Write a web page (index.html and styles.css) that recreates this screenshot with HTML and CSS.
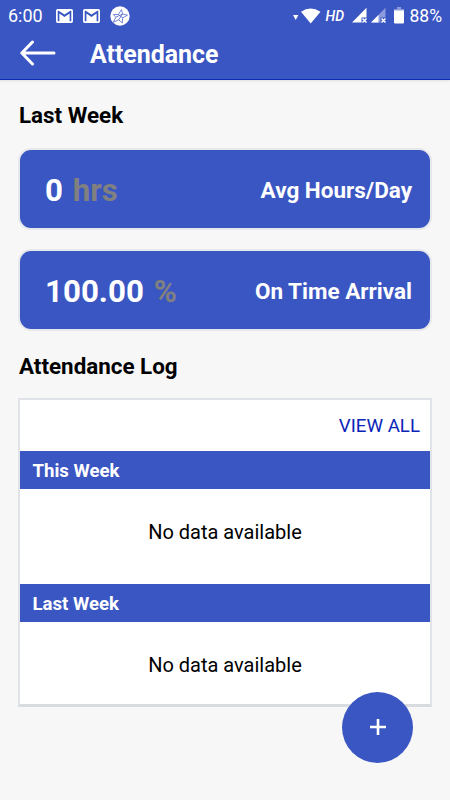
FILE: index.html
```
<!DOCTYPE html>
<html lang="en">
<head>
<meta charset="utf-8">
<title>Attendance</title>
<link rel="stylesheet" href="styles.css">
</head>

<body>

<div class="top">
	<div class="status">
		<span class="time">6:00</span>
		<svg class="mail" width="17" height="14" viewBox="2 4 20 16" preserveAspectRatio="none"><path d="M20 18h-2V9.250L12 13 6 9.250V18H4V6h1.200l6.800 4.250L18.800 6H20zm0-14H4a2 2 0 0 0-2 2v12a2 2 0 0 0 2 2h16a2 2 0 0 0 2-2V6a2 2 0 0 0-2-2z" fill="#fff"/></svg>
		<svg class="mail" width="17" height="14" viewBox="2 4 20 16" preserveAspectRatio="none"><path d="M20 18h-2V9.250L12 13 6 9.250V18H4V6h1.200l6.800 4.250L18.800 6H20zm0-14H4a2 2 0 0 0-2 2v12a2 2 0 0 0 2 2h16a2 2 0 0 0 2-2V6a2 2 0 0 0-2-2z" fill="#fff"/></svg>
		<svg class="star" width="20" height="20" viewBox="0 0 20 20"><circle cx="10" cy="10" r="9.7" fill="#fff"/><path d="M11.500 3.500l1 4.500 5 1.200-4.800 2.600-.4 5.200-3.600-3.200-5.500 2.500 2.600-5-2.500-2.900 5 .2zM5.800 11.300l6.700-3.300M8.300 8.600l4.400 3.200M12.500 8l-3.800 5.800" fill="none" stroke="#5368cc" stroke-width=".8"/></svg>
		<div class="right">
			<svg width="28" height="18" viewBox="0 0 28 18"><path d="M0 8h5.400l-2.700 5z" fill="#fff"/><path d="M8 4.800Q17.500-1.800 27.500 4.800L17.700 16.500z" fill="#fff"/></svg>
			<span class="hd">HD</span>
			<svg class="signal" width="35" height="17" viewBox="0 0 35 17"><path d="M0 15.500 14.500.8v9.700h-5v5z" fill="#fff"/><path d="M10.500 11.500l4 4m0-4l-4 4" stroke="#fff" stroke-width="1.500"/><path d="M19 15.500 33.500.8v9.700h-5v5z" fill="#8c9bdd"/><path d="M19 15.500 26.500 7.900v7.600z" fill="#fff"/><path d="M29.500 11.500l4 4m0-4l-4 4" stroke="#fff" stroke-width="1.500"/></svg>
			<svg class="battery" width="10" height="17" viewBox="0 0 10 17"><path d="M3 0h4v2h3v2H0V2h3z" fill="#8c9bdd"/><path d="M0 3.500h10V15.500q0 1-1 1H1q-1 0-1-1z" fill="#fff"/></svg>
			<span class="percent">88%</span>
		</div>
	</div>
	<div class="bar">
		<svg width="36" height="26" viewBox="0 0 36 26"><path d="M12.500 2 1.800 13l10.700 11M2 13h32" fill="none" stroke="#fff" stroke-width="3" stroke-linecap="round" stroke-linejoin="round"/></svg>
		<h1>Attendance</h1>
	</div>
</div>

<div class="main">
	<h2>Last Week</h2>
	<div class="card">
		<div class="num">0 <span>hrs</span></div>
		<div class="label">Avg Hours/Day</div>
	</div>
	<div class="card">
		<div class="num">100.00 <span>%</span></div>
		<div class="label">On Time Arrival</div>
	</div>
	<h2 class="log-title">Attendance Log</h2>
	<div class="log">
		<div class="all"><a>VIEW ALL</a></div>
		<h3>This Week</h3>
		<p>No data available</p>
		<h3>Last Week</h3>
		<p class="last">No data available</p>
	</div>
</div>

<div class="add"><svg width="16" height="16" viewBox="0 0 16 16"><path d="M8 0v16M0 8h16" stroke="#fff" stroke-width="2.600"/></svg></div>

</body>
</html>
```
FILE: styles.css
```
* { margin: 0; padding: 0; box-sizing: border-box; }

body { width: 450px; height: 800px; overflow: hidden; position: relative; background: #f7f7f7; color: #000; font-family: Roboto, "Liberation Sans", sans-serif; }
svg { display: block; flex: none; }

.top { height: 80px; background: #3a56c3; border-bottom: 1px solid #0b2bb0; color: #fff; box-shadow: 0 1px 2px #ddd; }
.status { display: flex; align-items: center; height: 31px; padding: 0 8px; }
.time { width: 48px; padding-top: 1px; font-size: 18px; line-height: 30px; }
.mail { margin-right: 10px; }
.right { display: flex; align-items: center; margin-left: auto; }
.hd { width: 26px; margin-left: 5px; font-size: 14px; font-weight: 500; font-style: italic; }
.percent { margin-left: 6px; padding-top: 1px; font-size: 17.5px; line-height: 30px; }
.battery { margin-left: 7px; }

.bar { display: flex; align-items: center; height: 44px; padding-left: 20px; }
.bar h1 { padding-top: 4px; margin-left: 34px; font-size: 24.9px; line-height: 40px; font-weight: 700; }

.main { padding: 18px 18px 0; }
.main h2 { height: 50px; padding-left: 1px; font-size: 22.4px; line-height: 35px; font-weight: 700; }

.card { display: flex; align-items: center; justify-content: space-between; height: 82px; margin-bottom: 19px; padding: 2px 17px 0 25px; background: #3a56c3; border: 2px solid #e6e8ec; border-radius: 13px; color: #fff; }
.num { font-size: 31.3px; font-weight: 700; }
.num span { margin-left: 2px; color: #808080; }
.label { padding-right: 1px; font-size: 22.5px; font-weight: 700; }

.main .log-title { height: 48px; line-height: 33px; }
.log { height: 309px; background: #fff; border: 2px solid #e0e4e8; border-bottom: 3px solid #d8dce0; }
.all { height: 51px; padding-right: 10px; text-align: right; font-size: 18.7px; line-height: 52px; color: #0b24b8; }
.log h3 { height: 38px; padding-left: 12.5px; background: #3a56c3; color: #fff; font-size: 18.6px; line-height: 40px; font-weight: 700; }
.log p { height: 95px; text-align: center; font-size: 20px; line-height: 87px; }
.log .last { height: 82px; }

.add { display: flex; align-items: center; justify-content: center; position: absolute; left: 342px; top: 692px; width: 71px; height: 71px; padding-bottom: 1px; border-radius: 50%; background: #3a56c3; }
```
